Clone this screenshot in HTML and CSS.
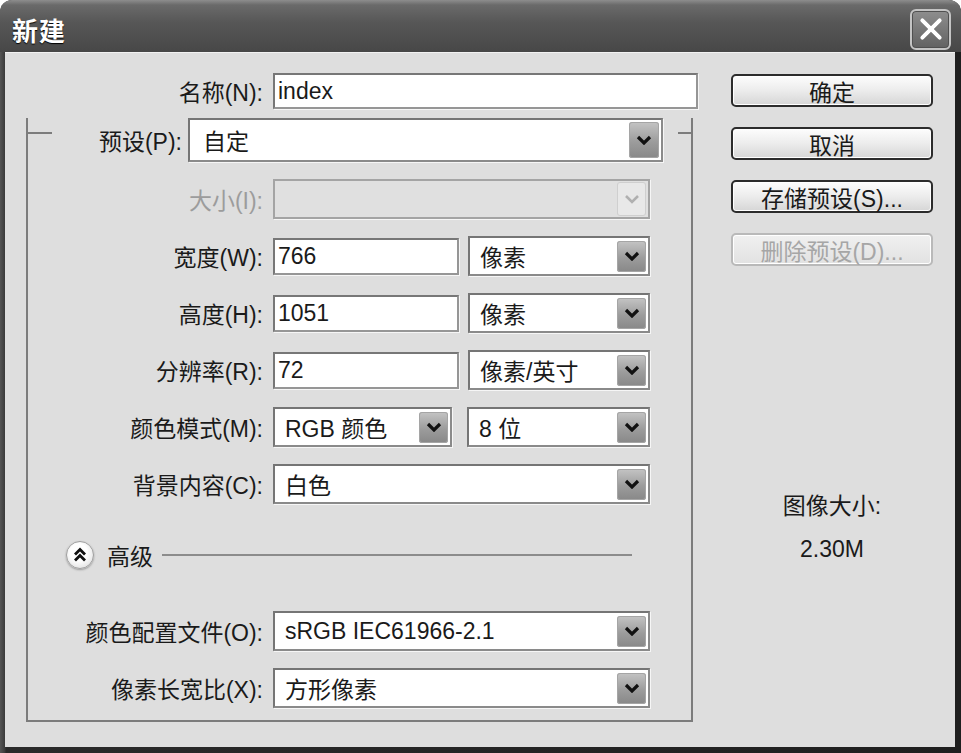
FILE: index.html
```html
<!DOCTYPE html>
<html lang="zh-CN">
<head>
<meta charset="utf-8">
<title>新建</title>
<link rel="stylesheet" href="styles.css">
</head>
<body>
<div class="window">
  <div class="titlebar">
    <span class="title">新建</span>
    <div class="close">
      <svg viewBox="0 0 24 24" width="26" height="26"><path d="M4 4 L20 20 M20 4 L4 20" stroke="#fff" stroke-width="3.6" stroke-linecap="round" fill="none"/></svg>
    </div>
  </div>
  <div class="body">
    <div class="form">
      <div class="name-row">
        <span class="lbl name-lbl">名称(N):</span>
        <div class="input name-input">index</div>
      </div>
      <div class="group">
        <div class="legend">
          <span class="gline gline-left"></span>
          <span class="lbl legend-lbl">预设(P):</span>
          <div class="select preset">
            <span class="val">自定</span>
            <span class="arrow"><svg viewBox="0 0 16 10" width="16" height="10"><polyline points="2,2 8,8 14,2" fill="none" stroke="#111" stroke-width="3.2"/></svg></span>
          </div>
          <span class="gline gline-right"></span>
        </div>

        <div class="row">
          <span class="lbl disabled-lbl">大小(I):</span>
          <div class="select full disabled">
            <span class="val"></span>
            <span class="arrow"><svg viewBox="0 0 16 10" width="16" height="10"><polyline points="2,2 8,8 14,2" fill="none" stroke="#b0b0b0" stroke-width="2.6"/></svg></span>
          </div>
        </div>

        <div class="row">
          <span class="lbl">宽度(W):</span>
          <div class="input half">766</div>
          <div class="select half">
            <span class="val">像素</span>
            <span class="arrow"><svg viewBox="0 0 16 10" width="16" height="10"><polyline points="2,2 8,8 14,2" fill="none" stroke="#111" stroke-width="3.2"/></svg></span>
          </div>
        </div>

        <div class="row">
          <span class="lbl">高度(H):</span>
          <div class="input half">1051</div>
          <div class="select half">
            <span class="val">像素</span>
            <span class="arrow"><svg viewBox="0 0 16 10" width="16" height="10"><polyline points="2,2 8,8 14,2" fill="none" stroke="#111" stroke-width="3.2"/></svg></span>
          </div>
        </div>

        <div class="row">
          <span class="lbl">分辨率(R):</span>
          <div class="input half">72</div>
          <div class="select half">
            <span class="val">像素/英寸</span>
            <span class="arrow"><svg viewBox="0 0 16 10" width="16" height="10"><polyline points="2,2 8,8 14,2" fill="none" stroke="#111" stroke-width="3.2"/></svg></span>
          </div>
        </div>

        <div class="row">
          <span class="lbl">颜色模式(M):</span>
          <div class="select mode">
            <span class="val">RGB 颜色</span>
            <span class="arrow"><svg viewBox="0 0 16 10" width="16" height="10"><polyline points="2,2 8,8 14,2" fill="none" stroke="#111" stroke-width="3.2"/></svg></span>
          </div>
          <div class="select bits">
            <span class="val">8 位</span>
            <span class="arrow"><svg viewBox="0 0 16 10" width="16" height="10"><polyline points="2,2 8,8 14,2" fill="none" stroke="#111" stroke-width="3.2"/></svg></span>
          </div>
        </div>

        <div class="row">
          <span class="lbl">背景内容(C):</span>
          <div class="select full">
            <span class="val">白色</span>
            <span class="arrow"><svg viewBox="0 0 16 10" width="16" height="10"><polyline points="2,2 8,8 14,2" fill="none" stroke="#111" stroke-width="3.2"/></svg></span>
          </div>
        </div>

        <div class="adv">
          <span class="adv-icon"><svg viewBox="0 0 18 18" width="18" height="18"><polyline points="4,8.5 9,3.5 14,8.5" fill="none" stroke="#111" stroke-width="2.8"/><polyline points="4,14.5 9,9.5 14,14.5" fill="none" stroke="#111" stroke-width="2.8"/></svg></span>
          <span class="adv-text">高级</span>
          <span class="adv-line"></span>
        </div>

        <div class="row row-after-adv">
          <span class="lbl">颜色配置文件(O):</span>
          <div class="select full">
            <span class="val">sRGB IEC61966-2.1</span>
            <span class="arrow"><svg viewBox="0 0 16 10" width="16" height="10"><polyline points="2,2 8,8 14,2" fill="none" stroke="#111" stroke-width="3.2"/></svg></span>
          </div>
        </div>

        <div class="row">
          <span class="lbl">像素长宽比(X):</span>
          <div class="select full">
            <span class="val">方形像素</span>
            <span class="arrow"><svg viewBox="0 0 16 10" width="16" height="10"><polyline points="2,2 8,8 14,2" fill="none" stroke="#111" stroke-width="3.2"/></svg></span>
          </div>
        </div>
      </div>
    </div>

    <div class="side">
      <div class="btn">确定</div>
      <div class="btn">取消</div>
      <div class="btn">存储预设(S)...</div>
      <div class="btn btn-disabled">删除预设(D)...</div>
      <div class="info">
        <div class="info-label">图像大小:</div>
        <div class="info-value">2.30M</div>
      </div>
    </div>
  </div>
</div>
</body>
</html>
```

FILE: styles.css
```css
body {
  margin: 0;
  background: #ffffff;
  font-family: "Liberation Sans", "Noto Sans CJK SC", sans-serif;
  font-size: 23px;
  color: #1a1a1a;
}

.window {
  width: 961px;
  height: 753px;
  display: flex;
  flex-direction: column;
  background: linear-gradient(to right, #555555 0, #3a3a3a 5px, #2a2a2a 6px, #1f1f1f 100%);
  border-radius: 12px 12px 0 0;
  overflow: hidden;
}

.titlebar {
  height: 52px;
  flex: none;
  box-sizing: border-box;
  display: flex;
  align-items: center;
  justify-content: space-between;
  padding: 6px 10px 0 12px;
  background: linear-gradient(#8d8d8d 0px, #6a6a6a 5px, #575757 22px, #474747 52px);
}

.title {
  color: #ffffff;
  font-size: 26px;
  font-weight: bold;
  text-shadow: 0 1px 1px #000000;
  letter-spacing: 1px;
}

.close {
  width: 41px;
  height: 41px;
  box-sizing: border-box;
  border: 2px solid #c4c4c4;
  border-radius: 6px;
  background: linear-gradient(#8e8e8e, #626262);
  box-shadow: inset 0 0 0 1px #505050;
  display: flex;
  align-items: center;
  justify-content: center;
}

.body {
  flex: 1;
  display: flex;
  margin: 0 6px 6px 5px;
  background: #dedede;
  border-top: 1px solid #f2f2f2;
}

.form {
  width: 700px;
  padding-top: 20px;
}

.lbl {
  white-space: nowrap;
  text-align: right;
}

.name-row {
  display: flex;
  align-items: center;
  height: 36px;
}

.name-lbl {
  width: 258px;
  margin-right: 10px;
}

.input {
  box-sizing: border-box;
  background: #ffffff;
  border: 2px solid #777777;
  border-right-color: #969696;
  border-bottom-color: #969696;
  box-shadow: 1px 1px 0 #f6f6f6;
  display: flex;
  align-items: center;
  padding-left: 3px;
  white-space: nowrap;
}

.name-input {
  width: 425px;
  height: 36px;
}

.group {
  margin: 23px 0 0 21px;
  width: 667px;
  box-sizing: border-box;
  border: 2px solid #7c7c7c;
  border-top: 0;
  padding-bottom: 12px;
}

.legend {
  display: flex;
  align-items: flex-start;
  margin-top: -14px;
  height: 44px;
}

.gline {
  border-top: 2px solid #7c7c7c;
  margin-top: 14px;
}

.gline-left {
  width: 24px;
}

.gline-right {
  flex: 1;
  margin-left: 15px;
}

.legend-lbl {
  width: 130px;
  align-self: center;
}

.select {
  box-sizing: border-box;
  display: flex;
  align-items: center;
  background: #ffffff;
  border: 2px solid #757575;
  border-right-color: #8a8a8a;
  border-bottom-color: #8a8a8a;
  box-shadow: 1px 1px 0 #f6f6f6;
  height: 40px;
  padding: 0 2px 0 10px;
  white-space: nowrap;
}

.val {
  flex: 1;
}

.arrow {
  width: 29px;
  height: 31px;
  border-radius: 3px;
  background: linear-gradient(#c4c4c4, #9c9c9c 55%, #888888);
  box-shadow: inset 0 0 0 1px #a5a5a5;
  display: flex;
  align-items: center;
  justify-content: center;
}

.preset {
  margin-left: 6px;
  width: 475px;
  height: 44px;
  padding-left: 13px;
}

.preset .arrow {
  height: 36px;
  width: 30px;
}

.row {
  display: flex;
  align-items: center;
  height: 40px;
  margin-top: 17px;
}

.row .lbl {
  width: 235px;
  margin-right: 10px;
}

.disabled-lbl {
  color: #9c9c9c;
}

.input.half {
  width: 186px;
  height: 37px;
}

.select.half {
  width: 182px;
  margin-left: 9px;
}

.select.full {
  width: 377px;
}

.select.mode {
  width: 179px;
}

.select.bits {
  width: 183px;
  margin-left: 15px;
}

.select.disabled {
  background: #e0e0e0;
  border-color: #a4a4a4;
}

.select.disabled .arrow {
  background: #e8e8e8;
  box-shadow: inset 0 0 0 1px #cfcfcf;
  height: 34px;
}

.adv {
  display: flex;
  align-items: center;
  height: 26px;
  margin-top: 38px;
  padding-left: 38px;
}

.adv-icon {
  width: 28px;
  height: 28px;
  box-sizing: border-box;
  border-radius: 50%;
  border: 1px solid #a0a0a0;
  background: radial-gradient(circle at 45% 40%, #ffffff 40%, #d4d4d4 100%);
  box-shadow: 0 1px 2px #9a9a9a;
  display: flex;
  align-items: center;
  justify-content: center;
}

.adv-text {
  margin-left: 13px;
}

.adv-line {
  width: 470px;
  margin-left: 9px;
  border-top: 2px solid #8c8c8c;
}

.row-after-adv {
  margin-top: 43px;
}

.side {
  width: 202px;
  margin-left: 26px;
  padding-top: 21px;
  display: flex;
  flex-direction: column;
  gap: 20px;
}

.btn {
  height: 33px;
  box-sizing: border-box;
  border: 2px solid #2c2c2c;
  border-radius: 5px;
  background: linear-gradient(#fdfdfd, #ececec 50%, #d6d6d6);
  box-shadow: inset 0 0 0 1px #ffffff;
  display: flex;
  align-items: center;
  justify-content: center;
  white-space: nowrap;
}

.btn-disabled {
  border-color: #b9b9b9;
  color: #a6a6a6;
  background: linear-gradient(#f0f0f0, #e2e2e2);
}

.info {
  margin-top: 207px;
  text-align: center;
  line-height: 26px;
}

.info-value {
  margin-top: 17px;
}
```
